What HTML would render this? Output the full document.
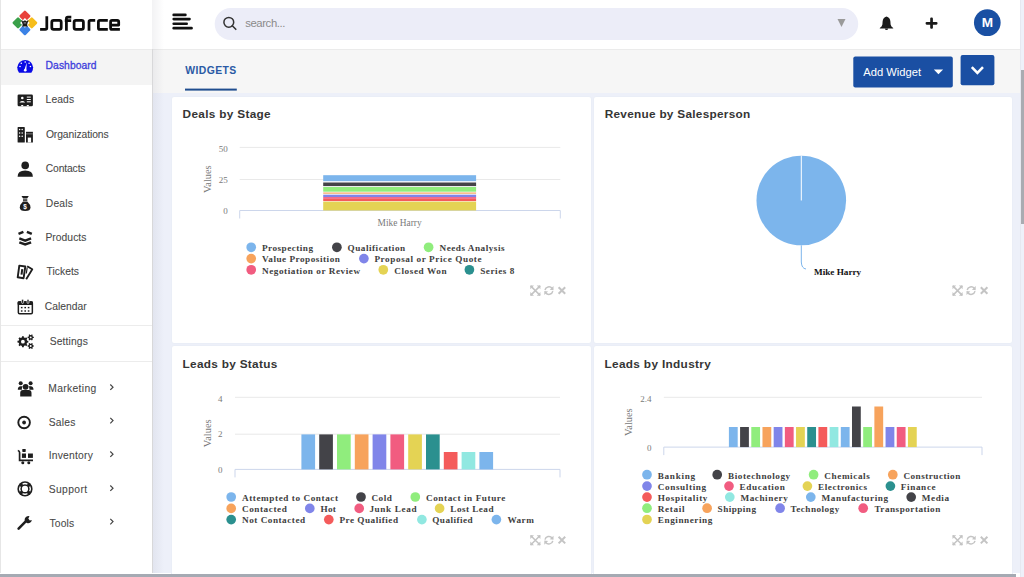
<!DOCTYPE html>
<html><head><meta charset="utf-8"><title>Joforce Dashboard</title>
<style>
*{margin:0;padding:0;box-sizing:border-box}
html,body{width:1024px;height:577px;overflow:hidden;background:#fff;font-family:"Liberation Sans",sans-serif}
.r{position:absolute}
</style></head><body>

<div class="r" id="content" style="left:153px;top:93px;width:867px;height:480px;background:#edf0f9"></div>
<div class="r" id="subheader" style="left:153px;top:50px;width:867px;height:43px;background:#f6f6f6"></div>
<div class="r" id="header" style="left:153px;top:0;width:867px;height:50px;background:#fff;border-bottom:1px solid #ebebeb"></div>
<div class="r" id="scroll" style="left:1020px;top:0;width:4px;height:577px;background:#eef0f9;border-left:1px solid #e6e8f0"></div>
<div class="r" style="left:1021px;top:70px;width:3px;height:154px;background:#a9abb1"></div>
<div class="r" id="sidebar" style="left:0;top:0;width:153px;height:573px;background:#fff;border-left:1px solid #e6e6e6"></div>
<div class="r" style="left:152px;top:49px;width:1px;height:524px;background:#e3e3e3"></div>
<div class="r" style="left:1px;top:50px;width:151px;height:35px;background:#f4f4f4"></div>
<div class="r" id="shadow" style="left:152px;top:0;width:12px;height:573px;background:linear-gradient(to right,rgba(0,0,40,0.05),rgba(0,0,40,0))"></div>
<div class="r" style="left:1px;top:49px;width:151px;height:1px;background:#ebebeb"></div>
<div class="r" style="left:1px;top:325px;width:151px;height:1px;background:#ececec"></div>
<div class="r" style="left:1px;top:361px;width:151px;height:1px;background:#ececec"></div>
<div class="r card" style="left:171px;top:96px;width:421px;height:248px;background:#fff;border:1px solid #eaeef7;border-radius:3px"></div>
<div class="r card" style="left:593px;top:96px;width:420px;height:248px;background:#fff;border:1px solid #eaeef7;border-radius:3px"></div>
<div class="r card" style="left:171px;top:345px;width:421px;height:235px;background:#fff;border:1px solid #eaeef7;border-radius:3px"></div>
<div class="r card" style="left:593px;top:345px;width:420px;height:235px;background:#fff;border:1px solid #eaeef7;border-radius:3px"></div>
<div class="r" style="left:0;top:0;width:1024px;height:577px"><svg style="position:absolute;left:0;top:0" width="1024" height="577" viewBox="0 0 1024 577"><rect x="20.65" y="11.799999999999997" width="8.5" height="8.5" rx="1.2" fill="#e8423b" transform="rotate(45 24.9 16.049999999999997)"/><rect x="27.5" y="18.65" width="8.5" height="8.5" rx="1.2" fill="#f6bd1a" transform="rotate(45 31.75 22.9)"/><rect x="20.65" y="25.5" width="8.5" height="8.5" rx="1.2" fill="#3b82e6" transform="rotate(45 24.9 29.75)"/><rect x="13.799999999999997" y="18.65" width="8.5" height="8.5" rx="1.2" fill="#3aa04a" transform="rotate(45 18.049999999999997 22.9)"/><rect x="21.5" y="19.5" width="6.8" height="6.8" fill="#fff" transform="rotate(45 24.9 22.9)"/><path d="M21.099999999999998 20.5 L22.5 20.5 L22.9 21.4 L24.299999999999997 20.5 L25.5 20.5 L26.9 21.4 L27.299999999999997 20.5 L28.7 20.5 L27.5 22.9 L27.099999999999998 25.2 L28.099999999999998 26.5 L21.7 26.5 L22.7 25.2 L22.299999999999997 22.9 Z" fill="#1b1b1b"/><rect x="23.7" y="22.299999999999997" width="2.4" height="1.2" fill="#fff" opacity="0.5"/><g fill="none" stroke="#0d0d0d" stroke-width="2.75" stroke-linejoin="round"><path d="M40.1 29.4 L45.4 29.4 Q46.8 29.4 46.8 28 L46.8 16.2"/><rect x="51.8" y="20.4" width="9.4" height="9" rx="1.8"/><path d="M66.4 30.7 L66.4 18.6 Q66.4 17.1 67.9 17.1 L71.3 17.1 M64.8 20.5 L71.2 20.5"/><rect x="74.1" y="20.4" width="9.3" height="9" rx="1.8"/><path d="M89.0 30.7 L89.0 21.9 Q89.0 20.4 90.5 20.4 L95.2 20.4"/><path d="M107.8 20.4 L99.9 20.4 Q98.4 20.4 98.4 21.9 L98.4 27.9 Q98.4 29.4 99.9 29.4 L107.8 29.4"/><path d="M110.6 25 L118.7 25 L118.7 21.9 Q118.7 20.4 117.2 20.4 L112.1 20.4 Q110.6 20.4 110.6 21.9 L110.6 27.9 Q110.6 29.4 112.1 29.4 L119.9 29.4"/></g><text x="45.6" y="68.7" font-size="10.3" fill="#4040dc" stroke="#4040dc" stroke-width="0.3" font-family="Liberation Sans, sans-serif" textLength="50.94" lengthAdjust="spacing">Dashboard</text><text x="45.6" y="103.10000000000001" font-size="10.3" fill="#484848" stroke="#484848" stroke-width="0.08" font-family="Liberation Sans, sans-serif" textLength="28.44" lengthAdjust="spacing">Leads</text><text x="45.9" y="137.6" font-size="10.3" fill="#484848" stroke="#484848" stroke-width="0.08" font-family="Liberation Sans, sans-serif" textLength="62.77" lengthAdjust="spacing">Organizations</text><text x="45.75" y="171.9" font-size="10.3" fill="#484848" stroke="#484848" stroke-width="0.08" font-family="Liberation Sans, sans-serif" textLength="39.78" lengthAdjust="spacing">Contacts</text><text x="45.8" y="206.5" font-size="10.3" fill="#484848" stroke="#484848" stroke-width="0.08" font-family="Liberation Sans, sans-serif" textLength="27.14" lengthAdjust="spacing">Deals</text><text x="45.45" y="240.9" font-size="10.3" fill="#484848" stroke="#484848" stroke-width="0.08" font-family="Liberation Sans, sans-serif" textLength="40.93" lengthAdjust="spacing">Products</text><text x="46.45" y="275.29999999999995" font-size="10.3" fill="#484848" stroke="#484848" stroke-width="0.08" font-family="Liberation Sans, sans-serif" textLength="32.53" lengthAdjust="spacing">Tickets</text><text x="44.8" y="309.7" font-size="10.3" fill="#484848" stroke="#484848" stroke-width="0.08" font-family="Liberation Sans, sans-serif" textLength="41.8" lengthAdjust="spacing">Calendar</text><text x="49.7" y="344.9" font-size="10.3" fill="#484848" stroke="#484848" stroke-width="0.08" font-family="Liberation Sans, sans-serif" textLength="38.13" lengthAdjust="spacing">Settings</text><text x="48.3" y="392.2" font-size="10.3" fill="#484848" stroke="#484848" stroke-width="0.08" font-family="Liberation Sans, sans-serif" textLength="47.92" lengthAdjust="spacing">Marketing</text><text x="48.7" y="425.7" font-size="10.3" fill="#484848" stroke="#484848" stroke-width="0.08" font-family="Liberation Sans, sans-serif" textLength="26.77" lengthAdjust="spacing">Sales</text><text x="48.7" y="459.2" font-size="10.3" fill="#484848" stroke="#484848" stroke-width="0.08" font-family="Liberation Sans, sans-serif" textLength="44.16" lengthAdjust="spacing">Inventory</text><text x="48.7" y="493.29999999999995" font-size="10.3" fill="#484848" stroke="#484848" stroke-width="0.08" font-family="Liberation Sans, sans-serif" textLength="38.41" lengthAdjust="spacing">Support</text><text x="49.5" y="526.6999999999999" font-size="10.3" fill="#484848" stroke="#484848" stroke-width="0.08" font-family="Liberation Sans, sans-serif" textLength="24.55" lengthAdjust="spacing">Tools</text><path d="M110.3 384.5 L113 387.2 L110.3 389.9" fill="none" stroke="#444" stroke-width="1.2"/><path d="M110.3 417.90000000000003 L113 420.6 L110.3 423.3" fill="none" stroke="#444" stroke-width="1.2"/><path d="M110.3 451.5 L113 454.2 L110.3 456.9" fill="none" stroke="#444" stroke-width="1.2"/><path d="M110.3 485.5 L113 488.2 L110.3 490.9" fill="none" stroke="#444" stroke-width="1.2"/><path d="M110.3 518.9 L113 521.6 L110.3 524.3000000000001" fill="none" stroke="#444" stroke-width="1.2"/><path d="M19.0 72.7 L31.4 72.7 A7.9 7.9 0 1 0 19.0 72.7 Z" fill="#0a0ae6"/><circle cx="20" cy="66.5" r="0.8" fill="#fff"/><circle cx="21.3" cy="63.3" r="0.8" fill="#fff"/><circle cx="25.2" cy="62" r="0.8" fill="#fff"/><circle cx="29.1" cy="63.3" r="0.8" fill="#fff"/><circle cx="30.4" cy="66.5" r="0.8" fill="#fff"/><path d="M24.2 70.4 L26.8 62.5 L26.3 70.4 Z" fill="#fff"/><circle cx="25.2" cy="70.2" r="1.3" fill="#fff"/><rect x="17.6" y="94.4" width="15.3" height="11.8" rx="1.3" fill="#1e1e1e"/><circle cx="22.3" cy="98" r="1.3" fill="#fff"/><path d="M19.4 102.5 Q22.3 99.6 25.2 102.5 Z" fill="#fff"/><rect x="26.8" y="96.6" width="4" height="1" fill="#fff"/><rect x="26.8" y="99" width="4" height="1" fill="#fff"/><rect x="26.8" y="101.3" width="4" height="1" fill="#fff"/><rect x="21.2" y="105" width="2" height="1.2" fill="#fff"/><rect x="26.8" y="105" width="2" height="1.2" fill="#fff"/><rect x="17.6" y="127.1" width="7.2" height="15.4" rx="0.6" fill="#1e1e1e"/><circle cx="19.6" cy="129.6" r="0.75" fill="#fff"/><circle cx="22.2" cy="129.6" r="0.75" fill="#fff"/><circle cx="19.6" cy="132.9" r="0.75" fill="#fff"/><circle cx="22.2" cy="132.9" r="0.75" fill="#fff"/><circle cx="19.6" cy="136.2" r="0.75" fill="#fff"/><circle cx="22.2" cy="136.2" r="0.75" fill="#fff"/><rect x="26" y="131.8" width="6.9" height="10.7" fill="#1e1e1e"/><rect x="26" y="133.3" width="6.9" height="1.1" fill="#777"/><rect x="27.8" y="137.6" width="3.3" height="4.9" fill="#fff"/><circle cx="25.2" cy="165.4" r="3.8" fill="#1e1e1e"/><path d="M17.6 176.7 Q17.6 170.5 25.2 170.5 Q32.9 170.5 32.9 176.7 Z" fill="#1e1e1e"/><path d="M21.5 196 L28.8 196 L27.2 198.5 L23.1 198.5 Z" fill="#1e1e1e"/><rect x="23" y="199.3" width="4.3" height="1.5" fill="#1e1e1e"/><path d="M23 201.5 L27.3 201.5 Q30.5 204.5 30.5 207.5 Q30.5 211 25.15 211 Q19.8 211 19.8 207.5 Q19.8 204.5 23 201.5 Z" fill="#1e1e1e"/><text x="25.15" y="209.2" font-size="6.5" font-weight="bold" fill="#fff" font-family="Liberation Sans, sans-serif" text-anchor="middle">$</text><g fill="none" stroke="#1e1e1e" stroke-width="2.5" stroke-linejoin="miter"><path d="M18.5 233.8 L23.4 231.8 M26.9 231.8 L31.8 233.8"/><path d="M19.3 238.4 L25.2 240.6 L31.1 238.4"/><path d="M19.3 242.3 L25.2 244.5 L31.1 242.3"/></g><path d="M19.3 265.6 L25.3 266.5 L23.6 278.2 L17.7 277.3 Z" fill="none" stroke="#1e1e1e" stroke-width="1.9" stroke-linejoin="round"/><rect x="20.9" y="269" width="2.0" height="5.6" fill="#1e1e1e" transform="rotate(8 21.9 271.8)"/><path d="M27.2 266.3 L32.3 269.2 L26.2 279.3" fill="none" stroke="#1e1e1e" stroke-width="1.8" stroke-linejoin="round"/><path d="M27.2 267.5 L26.3 273.5" fill="none" stroke="#1e1e1e" stroke-width="1.2"/><rect x="18.35" y="302" width="14" height="11.8" rx="1.2" fill="none" stroke="#1e1e1e" stroke-width="1.5"/><rect x="17.6" y="301.3" width="15.3" height="3.6" rx="1" fill="#1e1e1e"/><rect x="21.6" y="299.2" width="2.0" height="4.2" rx="1" fill="#1e1e1e" stroke="#fff" stroke-width="0.7"/><rect x="27.0" y="299.2" width="2.0" height="4.2" rx="1" fill="#1e1e1e" stroke="#fff" stroke-width="0.7"/><rect x="20.9" y="306.90000000000003" width="1.6" height="1.4" fill="#1e1e1e"/><rect x="24.4" y="306.90000000000003" width="1.6" height="1.4" fill="#1e1e1e"/><rect x="27.8" y="306.90000000000003" width="1.6" height="1.4" fill="#1e1e1e"/><rect x="20.9" y="310.3" width="1.6" height="1.4" fill="#1e1e1e"/><rect x="24.4" y="310.3" width="1.6" height="1.4" fill="#1e1e1e"/><rect x="27.8" y="310.3" width="1.6" height="1.4" fill="#1e1e1e"/><path d="M27.08 340.69 L28.33 340.81 L28.33 342.59 L27.08 342.71 L26.99 343.03 L26.87 343.35 L26.73 343.65 L26.57 343.94 L27.37 344.91 L26.11 346.17 L25.14 345.37 L24.85 345.53 L24.55 345.67 L24.23 345.79 L23.91 345.88 L23.79 347.13 L22.01 347.13 L21.89 345.88 L21.57 345.79 L21.25 345.67 L20.95 345.53 L20.66 345.37 L19.69 346.17 L18.43 344.91 L19.23 343.94 L19.07 343.65 L18.93 343.35 L18.81 343.03 L18.72 342.71 L17.47 342.59 L17.47 340.81 L18.72 340.69 L18.81 340.37 L18.93 340.05 L19.07 339.75 L19.23 339.46 L18.43 338.49 L19.69 337.23 L20.66 338.03 L20.95 337.87 L21.25 337.73 L21.57 337.61 L21.89 337.52 L22.01 336.27 L23.79 336.27 L23.91 337.52 L24.23 337.61 L24.55 337.73 L24.85 337.87 L25.14 338.03 L26.11 337.23 L27.37 338.49 L26.57 339.46 L26.73 339.75 L26.87 340.05 L26.99 340.37 Z M24.799999999999997 341.7 A1.9 1.9 0 1 0 21.0 341.7 A1.9 1.9 0 1 0 24.799999999999997 341.7 Z" fill="#1e1e1e" fill-rule="evenodd"/><path d="M32.91 336.75 L33.84 336.78 L33.84 338.02 L32.91 338.05 L32.81 338.31 L32.69 338.55 L32.54 338.78 L32.37 338.98 L32.81 339.81 L31.73 340.43 L31.24 339.64 L30.97 339.68 L30.70 339.70 L30.43 339.68 L30.16 339.64 L29.67 340.43 L28.59 339.81 L29.03 338.98 L28.86 338.78 L28.71 338.55 L28.59 338.31 L28.49 338.05 L27.56 338.02 L27.56 336.78 L28.49 336.75 L28.59 336.49 L28.71 336.25 L28.86 336.02 L29.03 335.82 L28.59 334.99 L29.67 334.37 L30.16 335.16 L30.43 335.12 L30.70 335.10 L30.97 335.12 L31.24 335.16 L31.73 334.37 L32.81 334.99 L32.37 335.82 L32.54 336.02 L32.69 336.25 L32.81 336.49 Z M31.65 337.4 A0.95 0.95 0 1 0 29.75 337.4 A0.95 0.95 0 1 0 31.65 337.4 Z" fill="#1e1e1e" fill-rule="evenodd"/><path d="M32.91 345.35 L33.84 345.38 L33.84 346.62 L32.91 346.65 L32.81 346.91 L32.69 347.15 L32.54 347.38 L32.37 347.58 L32.81 348.41 L31.73 349.03 L31.24 348.24 L30.97 348.28 L30.70 348.30 L30.43 348.28 L30.16 348.24 L29.67 349.03 L28.59 348.41 L29.03 347.58 L28.86 347.38 L28.71 347.15 L28.59 346.91 L28.49 346.65 L27.56 346.62 L27.56 345.38 L28.49 345.35 L28.59 345.09 L28.71 344.85 L28.86 344.62 L29.03 344.42 L28.59 343.59 L29.67 342.97 L30.16 343.76 L30.43 343.72 L30.70 343.70 L30.97 343.72 L31.24 343.76 L31.73 342.97 L32.81 343.59 L32.37 344.42 L32.54 344.62 L32.69 344.85 L32.81 345.09 Z M31.65 346.0 A0.95 0.95 0 1 0 29.75 346.0 A0.95 0.95 0 1 0 31.65 346.0 Z" fill="#1e1e1e" fill-rule="evenodd"/><circle cx="20.7" cy="383.3" r="2" fill="#1e1e1e"/><circle cx="30.6" cy="383.3" r="2" fill="#1e1e1e"/><circle cx="25.6" cy="386.8" r="2.9" fill="#1e1e1e"/><path d="M17.8 389.8 Q17.8 386.3 20.5 386.3 L22.6 386.3 Q21.6 387.8 21.9 389.8 Z" fill="#1e1e1e"/><path d="M33.5 389.8 Q33.5 386.3 30.8 386.3 L28.7 386.3 Q29.7 387.8 29.4 389.8 Z" fill="#1e1e1e"/><path d="M20.2 396.4 L20.2 393 Q20.2 390.1 23 390.1 L28.7 390.1 Q31.5 390.1 31.5 393 L31.5 396.4 Z" fill="#1e1e1e"/><circle cx="24.1" cy="422.5" r="5.8" fill="none" stroke="#1e1e1e" stroke-width="1.9"/><circle cx="24.1" cy="422.5" r="1.9" fill="#1e1e1e"/><path d="M17.8 450.5 Q19.6 450.8 19.6 452.6 L19.6 460.4 L33 460.4" fill="none" stroke="#1e1e1e" stroke-width="1.7"/><rect x="21.9" y="453.5" width="4.1" height="4.4" fill="#1e1e1e"/><rect x="28" y="453.5" width="4.9" height="4.4" fill="#1e1e1e"/><rect x="22.3" y="449" width="3.4" height="2.9" rx="0.6" fill="#1e1e1e"/><circle cx="22.8" cy="462.8" r="1.5" fill="#1e1e1e"/><circle cx="28.8" cy="462.8" r="1.5" fill="#1e1e1e"/><circle cx="25" cy="488.9" r="7.6" fill="#1e1e1e"/><circle cx="25" cy="488.9" r="3.1" fill="#fff"/><path d="M30.35 486.18 A6.0 6.0 0 0 1 30.35 491.62 L29.10 490.99 A4.6 4.6 0 0 0 29.10 486.81 Z" fill="#fff"/><path d="M27.72 494.25 A6.0 6.0 0 0 1 22.28 494.25 L22.91 493.00 A4.6 4.6 0 0 0 27.09 493.00 Z" fill="#fff"/><path d="M19.65 491.62 A6.0 6.0 0 0 1 19.65 486.18 L20.90 486.81 A4.6 4.6 0 0 0 20.90 490.99 Z" fill="#fff"/><path d="M22.28 483.55 A6.0 6.0 0 0 1 27.72 483.55 L27.09 484.80 A4.6 4.6 0 0 0 22.91 484.80 Z" fill="#fff"/><path d="M18.6 528.6 L26 521.2" stroke="#1e1e1e" stroke-width="2.6" stroke-linecap="round"/><path d="M29.5 516.3 A3.6 3.6 0 1 0 31.8 520.1 L29.8 520.4 L28.3 518.6 Z" fill="#1e1e1e"/><rect x="172.4" y="13.5" width="14.299999999999983" height="2.7" rx="1.3" fill="#111"/><rect x="172.4" y="17.7" width="18.400000000000006" height="2.7" rx="1.3" fill="#111"/><rect x="172.4" y="22.400000000000002" width="15.599999999999994" height="2.7" rx="1.3" fill="#111"/><rect x="172.4" y="26.8" width="20.400000000000006" height="2.7" rx="1.3" fill="#111"/><rect x="214.7" y="8" width="643.5" height="32" rx="16" fill="#ecedf8"/><circle cx="228.8" cy="22.3" r="4.9" fill="none" stroke="#333" stroke-width="1.5"/><path d="M232.3 25.8 L235.8 29.3" stroke="#333" stroke-width="1.6" stroke-linecap="round"/><text x="245.2" y="27.2" font-size="11.3" fill="#8a8a8a" font-weight="normal" font-family="Liberation Sans, sans-serif" text-anchor="start" textLength="40.2" lengthAdjust="spacing">search...</text><path d="M837.5 19 L845.5 19 L841.5 27 Z" fill="#9a9a9a"/><path d="M886.5 16.4 Q890.1 17.3 890.4 21.4 L890.6 24.6 Q891.0 26.9 893.2 27.9 L893.2 28.5 L879.8 28.5 L879.8 27.9 Q882.0 26.9 882.4 24.6 L882.6 21.4 Q882.9 17.3 886.5 16.4 Z" fill="#1a1a1a"/><path d="M884.9 28.5 A1.6 1.6 0 0 0 888.1 28.5 Z" fill="#1a1a1a"/><rect x="925.6" y="22" width="11.9" height="2.7" rx="1.1" fill="#1a1a1a"/><rect x="930.2" y="17.6" width="2.7" height="11.2" rx="1.1" fill="#1a1a1a"/><circle cx="987.3" cy="22.7" r="13.35" fill="#1a50a3"/><text x="987.5" y="27.3" font-size="13.6" fill="#fff" font-weight="bold" font-family="Liberation Sans, sans-serif" text-anchor="middle" >M</text><text x="185.3" y="73.8" font-size="10.4" fill="#2a5aa5" font-weight="bold" font-family="Liberation Sans, sans-serif" text-anchor="start" textLength="50.9" lengthAdjust="spacing">WIDGETS</text><rect x="185" y="88.6" width="51.8" height="2" fill="#1f4d8f"/><rect x="853.3" y="56.6" width="99.5" height="30.9" rx="2" fill="#1a4fa3"/><text x="863.3" y="75.8" font-size="11.2" fill="#fff" font-weight="normal" font-family="Liberation Sans, sans-serif" text-anchor="start" >Add Widget</text><path d="M933.8 69.6 L943.1 69.6 L938.45 74.3 Z" fill="#fff"/><rect x="960.6" y="55" width="33.8" height="30.2" rx="2" fill="#1a4fa3"/><path d="M971.8 67.2 L977.4 72.8 L983 67.2" fill="none" stroke="#fff" stroke-width="2.6"/><text x="182.6" y="118.3" font-size="11.8" fill="#353535" font-weight="bold" font-family="Liberation Sans, sans-serif" text-anchor="start" textLength="88.0" lengthAdjust="spacing">Deals by Stage</text><text x="604.7" y="118.3" font-size="11.8" fill="#353535" font-weight="bold" font-family="Liberation Sans, sans-serif" text-anchor="start" textLength="145.5" lengthAdjust="spacing">Revenue by Salesperson</text><text x="182.5" y="367.9" font-size="11.8" fill="#353535" font-weight="bold" font-family="Liberation Sans, sans-serif" text-anchor="start" textLength="94.8" lengthAdjust="spacing">Leads by Status</text><text x="604.5" y="367.9" font-size="11.8" fill="#353535" font-weight="bold" font-family="Liberation Sans, sans-serif" text-anchor="start" textLength="106.3" lengthAdjust="spacing">Leads by Industry</text><path d="M530.6 285.9 L540.1 295.4 M540.1 285.9 L530.6 295.4" stroke="#c4c4c4" stroke-width="1.5"/><path d="M530.3000000000001 285.59999999999997 L534.0 285.59999999999997 L530.3000000000001 289.29999999999995 Z M540.4 285.59999999999997 L536.7 285.59999999999997 L540.4 289.29999999999995 Z M530.3000000000001 295.7 L534.0 295.7 L530.3000000000001 292.0 Z M540.4 295.7 L536.7 295.7 L540.4 292.0 Z" fill="#c4c4c4"/><path d="M545.0 289.99999999999994 A4 4 0 0 1 552.1 288.4 M552.8 291.2 A4 4 0 0 1 545.6999999999999 292.79999999999995" fill="none" stroke="#c4c4c4" stroke-width="1.5"/><path d="M553.5 286.09999999999997 L553.5 290.2 L549.6999999999999 289.7 Z M544.3 295.09999999999997 L544.3 290.99999999999994 L548.1 291.49999999999994 Z" fill="#c4c4c4"/><path d="M558.6 287.2 L565.2 293.79999999999995 M565.2 287.2 L558.6 293.79999999999995" stroke="#c4c4c4" stroke-width="2"/><path d="M952.8 285.9 L962.3 295.4 M962.3 285.9 L952.8 295.4" stroke="#c4c4c4" stroke-width="1.5"/><path d="M952.5 285.59999999999997 L956.1999999999999 285.59999999999997 L952.5 289.29999999999995 Z M962.5999999999999 285.59999999999997 L958.9 285.59999999999997 L962.5999999999999 289.29999999999995 Z M952.5 295.7 L956.1999999999999 295.7 L952.5 292.0 Z M962.5999999999999 295.7 L958.9 295.7 L962.5999999999999 292.0 Z" fill="#c4c4c4"/><path d="M967.1999999999999 289.99999999999994 A4 4 0 0 1 974.3 288.4 M974.9999999999999 291.2 A4 4 0 0 1 967.8999999999999 292.79999999999995" fill="none" stroke="#c4c4c4" stroke-width="1.5"/><path d="M975.6999999999999 286.09999999999997 L975.6999999999999 290.2 L971.8999999999999 289.7 Z M966.4999999999999 295.09999999999997 L966.4999999999999 290.99999999999994 L970.3 291.49999999999994 Z" fill="#c4c4c4"/><path d="M980.8 287.2 L987.4 293.79999999999995 M987.4 287.2 L980.8 293.79999999999995" stroke="#c4c4c4" stroke-width="2"/><path d="M530.6 535.5 L540.1 545.0 M540.1 535.5 L530.6 545.0" stroke="#c4c4c4" stroke-width="1.5"/><path d="M530.3000000000001 535.2 L534.0 535.2 L530.3000000000001 538.9 Z M540.4 535.2 L536.7 535.2 L540.4 538.9 Z M530.3000000000001 545.3 L534.0 545.3 L530.3000000000001 541.6 Z M540.4 545.3 L536.7 545.3 L540.4 541.6 Z" fill="#c4c4c4"/><path d="M545.0 539.6 A4 4 0 0 1 552.1 538.0 M552.8 540.8000000000001 A4 4 0 0 1 545.6999999999999 542.4000000000001" fill="none" stroke="#c4c4c4" stroke-width="1.5"/><path d="M553.5 535.7 L553.5 539.8000000000001 L549.6999999999999 539.3000000000001 Z M544.3 544.7 L544.3 540.6 L548.1 541.1 Z" fill="#c4c4c4"/><path d="M558.6 536.8 L565.2 543.4 M565.2 536.8 L558.6 543.4" stroke="#c4c4c4" stroke-width="2"/><path d="M952.8 535.5 L962.3 545.0 M962.3 535.5 L952.8 545.0" stroke="#c4c4c4" stroke-width="1.5"/><path d="M952.5 535.2 L956.1999999999999 535.2 L952.5 538.9 Z M962.5999999999999 535.2 L958.9 535.2 L962.5999999999999 538.9 Z M952.5 545.3 L956.1999999999999 545.3 L952.5 541.6 Z M962.5999999999999 545.3 L958.9 545.3 L962.5999999999999 541.6 Z" fill="#c4c4c4"/><path d="M967.1999999999999 539.6 A4 4 0 0 1 974.3 538.0 M974.9999999999999 540.8000000000001 A4 4 0 0 1 967.8999999999999 542.4000000000001" fill="none" stroke="#c4c4c4" stroke-width="1.5"/><path d="M975.6999999999999 535.7 L975.6999999999999 539.8000000000001 L971.8999999999999 539.3000000000001 Z M966.4999999999999 544.7 L966.4999999999999 540.6 L970.3 541.1 Z" fill="#c4c4c4"/><path d="M980.8 536.8 L987.4 543.4 M987.4 536.8 L980.8 543.4" stroke="#c4c4c4" stroke-width="2"/><rect x="239.7" y="146.9" width="320.59999999999997" height="1" fill="#e9e9e9"/><rect x="239.7" y="179.0" width="320.59999999999997" height="1" fill="#e9e9e9"/><rect x="239.7" y="210.0" width="320.59999999999997" height="1" fill="#ccd6eb"/><rect x="239.2" y="210.5" width="1" height="8" fill="#ccd6eb"/><rect x="559.8" y="210.5" width="1" height="8" fill="#ccd6eb"/><text x="227.7" y="152.2" font-size="9.0" fill="#7a7a7a" font-weight="normal" font-family="Liberation Serif, serif" text-anchor="end" >50</text><text x="227.7" y="183.4" font-size="9.0" fill="#7a7a7a" font-weight="normal" font-family="Liberation Serif, serif" text-anchor="end" >25</text><text x="227.7" y="214.4" font-size="9.0" fill="#7a7a7a" font-weight="normal" font-family="Liberation Serif, serif" text-anchor="end" >0</text><text x="210.6" y="179.2" font-size="10.4" fill="#7a7a7a" font-family="Liberation Serif, serif" text-anchor="middle" transform="rotate(-90 210.6 179.2)">Values</text><rect x="323.2" y="175.2" width="152.9" height="6.0" fill="#7cb5ec"/><rect x="323.2" y="182.5" width="152.9" height="3.5999999999999943" fill="#434348"/><rect x="323.2" y="187" width="152.9" height="4.699999999999989" fill="#90ed7d"/><rect x="323.2" y="192.5" width="152.9" height="1.1999999999999886" fill="#f7a35c"/><rect x="323.2" y="194.7" width="152.9" height="2.4000000000000057" fill="#8085e9"/><rect x="323.2" y="197.1" width="152.9" height="1.700000000000017" fill="#f15c80"/><rect x="323.2" y="198.8" width="152.9" height="2.299999999999983" fill="#f45b5b"/><rect x="323.2" y="201.6" width="152.9" height="8.900000000000006" fill="#e4d354"/><text x="399.6" y="225.7" font-size="9.4" fill="#7a7a7a" font-weight="normal" font-family="Liberation Serif, serif" text-anchor="middle" >Mike Harry</text><circle cx="251.2" cy="247.3" r="4.85" fill="#7cb5ec"/><text x="262.0" y="251.10" font-size="9.2" fill="#404040" font-weight="bold" font-family="Liberation Serif, serif" textLength="51.01" lengthAdjust="spacing">Prospecting</text><circle cx="336.9" cy="247.3" r="4.85" fill="#434348"/><text x="347.6" y="251.10" font-size="9.2" fill="#404040" font-weight="bold" font-family="Liberation Serif, serif" textLength="57.51" lengthAdjust="spacing">Qualification</text><circle cx="428.6" cy="247.3" r="4.85" fill="#90ed7d"/><text x="439.5" y="251.10" font-size="9.2" fill="#404040" font-weight="bold" font-family="Liberation Serif, serif" textLength="65.09" lengthAdjust="spacing">Needs Analysis</text><circle cx="251.2" cy="258.6" r="4.85" fill="#f7a35c"/><text x="262.0" y="262.40" font-size="9.2" fill="#404040" font-weight="bold" font-family="Liberation Serif, serif" textLength="77.85" lengthAdjust="spacing">Value Proposition</text><circle cx="363.9" cy="258.6" r="4.85" fill="#8085e9"/><text x="374.4" y="262.40" font-size="9.2" fill="#404040" font-weight="bold" font-family="Liberation Serif, serif" textLength="107.17" lengthAdjust="spacing">Proposal or Price Quote</text><circle cx="251.2" cy="269.8" r="4.85" fill="#f15c80"/><text x="262.0" y="273.60" font-size="9.2" fill="#404040" font-weight="bold" font-family="Liberation Serif, serif" textLength="98.11" lengthAdjust="spacing">Negotiation or Review</text><circle cx="383.3" cy="269.8" r="4.85" fill="#e4d354"/><text x="394.2" y="273.60" font-size="9.2" fill="#404040" font-weight="bold" font-family="Liberation Serif, serif" textLength="52.47" lengthAdjust="spacing">Closed Won</text><circle cx="469.4" cy="269.8" r="4.85" fill="#2b908f"/><text x="480.2" y="273.60" font-size="9.2" fill="#404040" font-weight="bold" font-family="Liberation Serif, serif" textLength="34.22" lengthAdjust="spacing">Series 8</text><circle cx="801.3" cy="200.5" r="44.8" fill="#7cb5ec"/><rect x="800.8" y="155.7" width="1" height="44.8" fill="#fff"/><path d="M801.3 245.3 L801.3 262 Q801.6 268.5 806 269" fill="none" stroke="#7cb5ec" stroke-width="1"/><text x="814" y="275.1" font-size="9.2" fill="#111" font-weight="bold" font-family="Liberation Serif, serif" text-anchor="start" >Mike Harry</text><rect x="235" y="396.8" width="325" height="1" fill="#e9e9e9"/><rect x="235" y="433.7" width="325" height="1" fill="#e9e9e9"/><rect x="235" y="468.9" width="325" height="1" fill="#ccd6eb"/><rect x="234.5" y="469.4" width="1" height="8" fill="#ccd6eb"/><rect x="559.5" y="469.4" width="1" height="8" fill="#ccd6eb"/><text x="222.6" y="401.8" font-size="9.0" fill="#7a7a7a" font-weight="normal" font-family="Liberation Serif, serif" text-anchor="end" >4</text><text x="222.6" y="437.4" font-size="9.0" fill="#7a7a7a" font-weight="normal" font-family="Liberation Serif, serif" text-anchor="end" >2</text><text x="222.6" y="472.8" font-size="9.0" fill="#7a7a7a" font-weight="normal" font-family="Liberation Serif, serif" text-anchor="end" >0</text><text x="210.6" y="433.3" font-size="10.4" fill="#7a7a7a" font-family="Liberation Serif, serif" text-anchor="middle" transform="rotate(-90 210.6 433.3)">Values</text><rect x="301.4" y="434.4" width="13.7" height="35.0" fill="#7cb5ec"/><rect x="319.2" y="434.4" width="13.7" height="35.0" fill="#434348"/><rect x="337.0" y="434.4" width="13.7" height="35.0" fill="#90ed7d"/><rect x="354.8" y="434.4" width="13.7" height="35.0" fill="#f7a35c"/><rect x="372.6" y="434.4" width="13.7" height="35.0" fill="#8085e9"/><rect x="390.4" y="434.4" width="13.7" height="35.0" fill="#f15c80"/><rect x="408.2" y="434.4" width="13.7" height="35.0" fill="#e4d354"/><rect x="426.0" y="434.4" width="13.7" height="35.0" fill="#2b908f"/><rect x="443.8" y="452" width="13.7" height="17.4" fill="#f45b5b"/><rect x="461.6" y="452" width="13.7" height="17.4" fill="#91e8e1"/><rect x="479.4" y="452" width="13.7" height="17.4" fill="#7cb5ec"/><circle cx="231.2" cy="497" r="4.85" fill="#7cb5ec"/><text x="242.0" y="500.80" font-size="9.2" fill="#404040" font-weight="bold" font-family="Liberation Serif, serif" textLength="96.05" lengthAdjust="spacing">Attempted to Contact</text><circle cx="361" cy="497" r="4.85" fill="#434348"/><text x="371.5" y="500.80" font-size="9.2" fill="#404040" font-weight="bold" font-family="Liberation Serif, serif" textLength="20.3" lengthAdjust="spacing">Cold</text><circle cx="415.3" cy="497" r="4.85" fill="#90ed7d"/><text x="426.0" y="500.80" font-size="9.2" fill="#404040" font-weight="bold" font-family="Liberation Serif, serif" textLength="79.4" lengthAdjust="spacing">Contact in Future</text><circle cx="231.2" cy="508.4" r="4.85" fill="#f7a35c"/><text x="242.0" y="512.20" font-size="9.2" fill="#404040" font-weight="bold" font-family="Liberation Serif, serif" textLength="44.76" lengthAdjust="spacing">Contacted</text><circle cx="309.8" cy="508.4" r="4.85" fill="#8085e9"/><text x="320.5" y="512.20" font-size="9.2" fill="#404040" font-weight="bold" font-family="Liberation Serif, serif" textLength="15.31" lengthAdjust="spacing">Hot</text><circle cx="359.2" cy="508.4" r="4.85" fill="#f15c80"/><text x="369.4" y="512.20" font-size="9.2" fill="#404040" font-weight="bold" font-family="Liberation Serif, serif" textLength="47.16" lengthAdjust="spacing">Junk Lead</text><circle cx="439.6" cy="508.4" r="4.85" fill="#e4d354"/><text x="450.3" y="512.20" font-size="9.2" fill="#404040" font-weight="bold" font-family="Liberation Serif, serif" textLength="43.24" lengthAdjust="spacing">Lost Lead</text><circle cx="231.2" cy="519.6" r="4.85" fill="#2b908f"/><text x="242.0" y="523.40" font-size="9.2" fill="#404040" font-weight="bold" font-family="Liberation Serif, serif" textLength="63.1" lengthAdjust="spacing">Not Contacted</text><circle cx="328.8" cy="519.6" r="4.85" fill="#f45b5b"/><text x="339.5" y="523.40" font-size="9.2" fill="#404040" font-weight="bold" font-family="Liberation Serif, serif" textLength="58.52" lengthAdjust="spacing">Pre Qualified</text><circle cx="421.9" cy="519.6" r="4.85" fill="#91e8e1"/><text x="432.2" y="523.40" font-size="9.2" fill="#404040" font-weight="bold" font-family="Liberation Serif, serif" textLength="40.54" lengthAdjust="spacing">Qualified</text><circle cx="496.4" cy="519.6" r="4.85" fill="#7cb5ec"/><text x="507.4" y="523.40" font-size="9.2" fill="#404040" font-weight="bold" font-family="Liberation Serif, serif" textLength="26.42" lengthAdjust="spacing">Warm</text><rect x="663.8" y="396.8" width="318.20000000000005" height="1" fill="#e9e9e9"/><rect x="663.8" y="446.6" width="318.20000000000005" height="1" fill="#ccd6eb"/><rect x="663.3" y="447.1" width="1" height="8" fill="#ccd6eb"/><rect x="981.5" y="447.1" width="1" height="8" fill="#ccd6eb"/><text x="651.6" y="402.0" font-size="9.0" fill="#7a7a7a" font-weight="normal" font-family="Liberation Serif, serif" text-anchor="end" >2.4</text><text x="651.6" y="450.7" font-size="9.0" fill="#7a7a7a" font-weight="normal" font-family="Liberation Serif, serif" text-anchor="end" >0</text><text x="632.2" y="422.2" font-size="10.4" fill="#7a7a7a" font-family="Liberation Serif, serif" text-anchor="middle" transform="rotate(-90 632.2 422.2)">Values</text><rect x="728.90" y="427.0" width="8.8" height="20.1" fill="#7cb5ec"/><rect x="740.09" y="427.0" width="8.8" height="20.1" fill="#434348"/><rect x="751.28" y="427.0" width="8.8" height="20.1" fill="#90ed7d"/><rect x="762.47" y="427.0" width="8.8" height="20.1" fill="#f7a35c"/><rect x="773.66" y="427.0" width="8.8" height="20.1" fill="#8085e9"/><rect x="784.85" y="427.0" width="8.8" height="20.1" fill="#f15c80"/><rect x="796.04" y="427.0" width="8.8" height="20.1" fill="#e4d354"/><rect x="807.23" y="427.0" width="8.8" height="20.1" fill="#2b908f"/><rect x="818.42" y="427.0" width="8.8" height="20.1" fill="#f45b5b"/><rect x="829.61" y="427.0" width="8.8" height="20.1" fill="#91e8e1"/><rect x="840.80" y="427.0" width="8.8" height="20.1" fill="#7cb5ec"/><rect x="851.99" y="406.5" width="8.8" height="40.6" fill="#434348"/><rect x="863.18" y="427.0" width="8.8" height="20.1" fill="#90ed7d"/><rect x="874.37" y="406.5" width="8.8" height="40.6" fill="#f7a35c"/><rect x="885.56" y="427.0" width="8.8" height="20.1" fill="#8085e9"/><rect x="896.75" y="427.0" width="8.8" height="20.1" fill="#f15c80"/><rect x="907.94" y="427.0" width="8.8" height="20.1" fill="#e4d354"/><circle cx="647" cy="474.7" r="4.85" fill="#7cb5ec"/><text x="657.8" y="478.50" font-size="9.2" fill="#404040" font-weight="bold" font-family="Liberation Serif, serif" textLength="37.23" lengthAdjust="spacing">Banking</text><circle cx="717.2" cy="474.7" r="4.85" fill="#434348"/><text x="728.1" y="478.50" font-size="9.2" fill="#404040" font-weight="bold" font-family="Liberation Serif, serif" textLength="62.0" lengthAdjust="spacing">Biotechnology</text><circle cx="813.6" cy="474.7" r="4.85" fill="#90ed7d"/><text x="824.3" y="478.50" font-size="9.2" fill="#404040" font-weight="bold" font-family="Liberation Serif, serif" textLength="45.51" lengthAdjust="spacing">Chemicals</text><circle cx="892.8" cy="474.7" r="4.85" fill="#f7a35c"/><text x="903.4" y="478.50" font-size="9.2" fill="#404040" font-weight="bold" font-family="Liberation Serif, serif" textLength="56.92" lengthAdjust="spacing">Construction</text><circle cx="647" cy="486.1" r="4.85" fill="#8085e9"/><text x="657.8" y="489.90" font-size="9.2" fill="#404040" font-weight="bold" font-family="Liberation Serif, serif" textLength="48.29" lengthAdjust="spacing">Consulting</text><circle cx="729" cy="486.1" r="4.85" fill="#f15c80"/><text x="739.6" y="489.90" font-size="9.2" fill="#404040" font-weight="bold" font-family="Liberation Serif, serif" textLength="45.18" lengthAdjust="spacing">Education</text><circle cx="807.4" cy="486.1" r="4.85" fill="#e4d354"/><text x="818.1" y="489.90" font-size="9.2" fill="#404040" font-weight="bold" font-family="Liberation Serif, serif" textLength="48.89" lengthAdjust="spacing">Electronics</text><circle cx="890.4" cy="486.1" r="4.85" fill="#2b908f"/><text x="900.7" y="489.90" font-size="9.2" fill="#404040" font-weight="bold" font-family="Liberation Serif, serif" textLength="34.96" lengthAdjust="spacing">Finance</text><circle cx="647" cy="497.1" r="4.85" fill="#f45b5b"/><text x="657.8" y="500.90" font-size="9.2" fill="#404040" font-weight="bold" font-family="Liberation Serif, serif" textLength="49.65" lengthAdjust="spacing">Hospitality</text><circle cx="729.8" cy="497.1" r="4.85" fill="#91e8e1"/><text x="740.4" y="500.90" font-size="9.2" fill="#404040" font-weight="bold" font-family="Liberation Serif, serif" textLength="47.36" lengthAdjust="spacing">Machinery</text><circle cx="810.8" cy="497.1" r="4.85" fill="#7cb5ec"/><text x="821.6" y="500.90" font-size="9.2" fill="#404040" font-weight="bold" font-family="Liberation Serif, serif" textLength="66.49" lengthAdjust="spacing">Manufacturing</text><circle cx="911.2" cy="497.1" r="4.85" fill="#434348"/><text x="921.8" y="500.90" font-size="9.2" fill="#404040" font-weight="bold" font-family="Liberation Serif, serif" textLength="27.22" lengthAdjust="spacing">Media</text><circle cx="647" cy="508.2" r="4.85" fill="#90ed7d"/><text x="657.8" y="512.00" font-size="9.2" fill="#404040" font-weight="bold" font-family="Liberation Serif, serif" textLength="26.65" lengthAdjust="spacing">Retail</text><circle cx="707.1" cy="508.2" r="4.85" fill="#f7a35c"/><text x="717.6" y="512.00" font-size="9.2" fill="#404040" font-weight="bold" font-family="Liberation Serif, serif" textLength="38.38" lengthAdjust="spacing">Shipping</text><circle cx="780.1" cy="508.2" r="4.85" fill="#8085e9"/><text x="790.5" y="512.00" font-size="9.2" fill="#404040" font-weight="bold" font-family="Liberation Serif, serif" textLength="48.76" lengthAdjust="spacing">Technology</text><circle cx="863.2" cy="508.2" r="4.85" fill="#f15c80"/><text x="874.4" y="512.00" font-size="9.2" fill="#404040" font-weight="bold" font-family="Liberation Serif, serif" textLength="65.92" lengthAdjust="spacing">Transportation</text><circle cx="647" cy="519.5" r="4.85" fill="#e4d354"/><text x="657.8" y="523.30" font-size="9.2" fill="#404040" font-weight="bold" font-family="Liberation Serif, serif" textLength="54.52" lengthAdjust="spacing">Enginnering</text></svg></div>
<div class="r" id="bottombar" style="left:0;top:573.5px;width:1016px;height:4px;background:#a5aab3"></div>
</body></html>
